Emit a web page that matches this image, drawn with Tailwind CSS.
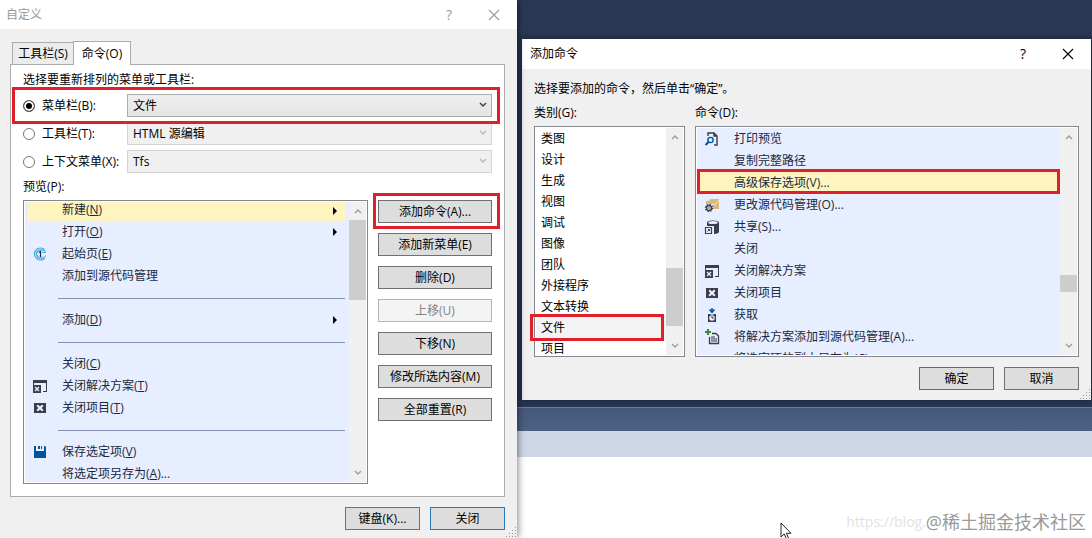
<!DOCTYPE html>
<html lang="zh-CN">
<head>
    <meta charset="UTF-8">
    <meta name="viewport" content="width=device-width, initial-scale=1.0">
    <title>自定义</title>
    <script src="https://cdn.jsdelivr.net/npm/@tailwindcss/browser@4"></script>
    <style>
        body, button, select {
            font-family: 'Open Sans', 'Noto Sans CJK SC', sans-serif;
        }
    </style>
</head>
<body class="bg-white text-xs leading-4 text-black">
    <!-- shared icons -->
    <svg class="hidden" xmlns="http://www.w3.org/2000/svg">
        <symbol id="close" viewBox="0 0 12 12"><path d="M1 1l10 10M11 1L1 11" fill="none" stroke="currentColor" stroke-width="1.1"/></symbol>
        <symbol id="down" viewBox="0 0 8 6"><path d="M1 1l3 3 3-3" fill="none" stroke="currentColor" stroke-width="1.5"/></symbol>
        <symbol id="up" viewBox="0 0 8 6"><path d="M1 5l3-3 3 3" fill="none" stroke="currentColor" stroke-width="1.5"/></symbol>
        <symbol id="arrow" viewBox="0 0 4 8"><path d="M0 0l4 4-4 4z" fill="currentColor"/></symbol>
        <symbol id="close-solution" viewBox="0 0 16 16">
            <path d="M1 2h14v12h-4v-1h3V5H2v2H1z" fill="#3b3d4a"/>
            <path d="M1 7h8v8H1z" fill="#3b3d4a"/>
            <path d="M3 9l4 4M7 9l-4 4" stroke="#e7eeff" stroke-width="1.4"/>
        </symbol>
        <symbol id="close-project" viewBox="0 0 16 16">
            <path d="M2 3h12v10H2z" fill="#3b3d4a"/>
            <path d="M5.200 5.200l5.600 5.600M10.800 5.200l-5.600 5.600" stroke="#f2f5ff" stroke-width="2"/>
        </symbol>
        <symbol id="grip" viewBox="0 0 12 12">
            <path d="M10 1h1v1h-1zM7 4h1v1h-1zM10 4h1v1h-1zM4 7h1v1h-1zM7 7h1v1h-1zM10 7h1v1h-1zM1 10h1v1h-1zM4 10h1v1h-1zM7 10h1v1h-1zM10 10h1v1h-1z" fill="#8d99b3"/>
        </symbol>
    </svg>

    <div class="grid min-h-screen grid-cols-[517fr_575fr]">
        <!-- customize window -->
        <section class="relative z-10 flex flex-col bg-[#f0f0f0] shadow-[0_0_8px_rgba(0,0,0,0.6)]">
            <header class="flex h-[29px] items-center bg-white pr-[17px] pl-1.5 text-[#999]">
                <h1 class="flex-1">自定义</h1>
                <button class="w-4 text-sm" aria-label="帮助">?</button>
                <button class="ml-[31px]" aria-label="关闭窗口"><svg class="size-3"><use href="#close"/></svg></button>
            </header>

            <div class="px-2.5 pt-3 pr-3">
                <div class="relative z-10 -mb-px flex items-end pl-0.5" role="tablist">
                    <button class="mb-px h-[22px] w-[61px] border border-r-0 border-b-0 border-[#acacac] bg-[#ececec]" role="tab">工具栏(S)</button>
                    <button class="h-6 w-[58px] border border-b-0 border-[#acacac] bg-white" role="tab" aria-selected="true">命令(O)</button>
                </div>

                <div class="border border-[#acacac] bg-white px-3 pt-[7px] pb-3">
                    <p>选择要重新排列的菜单或工具栏:</p>

                    <div class="mt-1.5 space-y-[5px]">
                        <div class="relative z-10 flex h-[23px] items-center">
                            <input id="r-menu" type="radio" name="target" checked class="size-3 appearance-none rounded-full border border-[#555] bg-white checked:bg-black checked:shadow-[inset_0_0_0_2px_white]">
                            <label for="r-menu" class="w-[92px] pl-[7px]">菜单栏(B):</label>
                            <div class="relative flex-1">
                                <select aria-label="菜单栏" class="block h-[23px] w-full appearance-none border border-[#acacac] bg-linear-to-b from-[#efefef] to-[#e4e4e4] px-[5px]"><option>文件</option></select>
                                <svg class="pointer-events-none absolute top-2 right-[5px] h-1.5 w-2 text-[#444]"><use href="#down"/></svg>
                            </div>
                            <div class="pointer-events-none absolute -inset-y-[7px] -right-2 -left-[11px] border-3 border-[#e01f2a]"></div>
                        </div>
                        <div class="flex h-[23px] items-center">
                            <input id="r-tool" type="radio" name="target" class="size-3 appearance-none rounded-full border border-[#777] bg-white">
                            <label for="r-tool" class="w-[92px] pl-[7px]">工具栏(T):</label>
                            <div class="relative flex-1">
                                <select disabled aria-label="工具栏" class="block h-[23px] w-full appearance-none border border-[#d4d4d4] bg-[#f0f0f0] px-[5px]"><option>HTML 源编辑</option></select>
                                <svg class="pointer-events-none absolute top-2 right-[5px] h-1.5 w-2 text-[#bbb]"><use href="#down"/></svg>
                            </div>
                        </div>
                        <div class="flex h-[23px] items-center">
                            <input id="r-ctx" type="radio" name="target" class="size-3 appearance-none rounded-full border border-[#777] bg-white">
                            <label for="r-ctx" class="w-[92px] pl-[7px] whitespace-nowrap">上下文菜单(X):</label>
                            <div class="relative flex-1">
                                <select disabled aria-label="上下文菜单" class="block h-[23px] w-full appearance-none border border-[#d4d4d4] bg-[#f0f0f0] px-[5px]"><option>Tfs</option></select>
                                <svg class="pointer-events-none absolute top-2 right-[5px] h-1.5 w-2 text-[#bbb]"><use href="#down"/></svg>
                            </div>
                        </div>
                    </div>

                    <p class="mt-1.5">预览(P):</p>

                    <div class="mt-[5px] flex gap-2.5">
                        <!-- menu preview -->
                        <div class="flex h-[284px] flex-1 border border-[#828790] bg-white p-px">
                            <ul class="flex-1 overflow-hidden bg-[#e7eeff] pr-1 pl-[3px] text-[#1b293e]">
                                <li class="flex h-[19px] items-center bg-[#fdf4bf] pr-2 pb-1 pl-[34px]"><span class="flex-1">新建(<u>N</u>)</span><svg class="mt-0.5 h-2 w-1 text-black"><use href="#arrow"/></svg></li>
                                <li class="flex h-[22px] items-center pr-2 pl-[34px]"><span class="flex-1">打开(<u>O</u>)</span><svg class="h-2 w-1 text-black"><use href="#arrow"/></svg></li>
                                <li class="flex h-[22px] items-center pl-1">
                                    <svg class="mr-3.5 size-4" viewBox="0 0 16 16" fill="none" stroke="#35a8d8">
                                        <path d="M12.500 3.500A6 6 0 1 0 12.500 12.500" stroke-width="1.200"/>
                                        <path d="M11.300 5A4 4 0 1 0 11.300 11" stroke-width="1.200"/>
                                        <path d="M10.500 2.500a6 6 0 0 1 3 4h-3M13.500 9.500a6 6 0 0 1-3 4" stroke-width="1"/>
                                        <path d="M7 6.500L8.500 5.500V11" stroke="#1b293e" stroke-width="1.200"/>
                                    </svg>
                                    起始页(<u>E</u>)
                                </li>
                                <li class="flex h-[22px] items-center pl-[34px]">添加到源代码管理</li>
                                <li class="flex h-[22px] items-center pl-[30px]"><hr class="flex-1 border-[#8591b0]"></li>
                                <li class="flex h-[22px] items-center pr-2 pl-[34px]"><span class="flex-1">添加(<u>D</u>)</span><svg class="h-2 w-1 text-black"><use href="#arrow"/></svg></li>
                                <li class="flex h-[22px] items-center pl-[30px]"><hr class="flex-1 border-[#8591b0]"></li>
                                <li class="flex h-[22px] items-center pl-[34px]">关闭(<u>C</u>)</li>
                                <li class="flex h-[22px] items-center pl-1"><svg class="mr-3.5 size-4"><use href="#close-solution"/></svg>关闭解决方案(<u>T</u>)</li>
                                <li class="flex h-[22px] items-center pl-1"><svg class="mr-3.5 size-4"><use href="#close-project"/></svg>关闭项目(<u>T</u>)</li>
                                <li class="flex h-[22px] items-center pl-[30px]"><hr class="flex-1 border-[#8591b0]"></li>
                                <li class="flex h-[22px] items-center pl-1">
                                    <svg class="mr-3.5 size-4" viewBox="0 0 16 16"><path d="M2 2h2v5h8V2h1l1 1v11H2zM6 2h2v3H6zM9 2h1v3H9z" fill="#00539c"/></svg>
                                    保存选定项(<u>V</u>)
                                </li>
                                <li class="flex h-[22px] items-center pl-[34px]">将选定项另存为(<u>A</u>)...</li>
                            </ul>
                            <div class="flex w-[17px] flex-col items-center bg-[#f0f0f0] text-[#a0a0a0]">
                                <svg class="my-1.5 h-1.5 w-2 shrink-0"><use href="#up"/></svg>
                                <div class="h-20 w-full bg-[#cdcdcd]"></div>
                                <svg class="mt-auto mb-1.5 h-1.5 w-2 shrink-0"><use href="#down"/></svg>
                            </div>
                        </div>

                        <div class="flex w-[114px] flex-col gap-2.5">
                            <div class="relative">
                                <button class="block h-[23px] w-full border border-[#707070] bg-[#ddd]">添加命令(A)...</button>
                                <div class="pointer-events-none absolute -top-[7px] -right-2 -bottom-1.5 -left-[5px] border-3 border-[#e01f2a]"></div>
                            </div>
                            <button class="h-[23px] border border-[#707070] bg-[#ddd]">添加新菜单(E)</button>
                            <button class="h-[23px] border border-[#707070] bg-[#ddd]">删除(D)</button>
                            <button disabled class="h-[23px] border border-[#b5b5b5] bg-[#f4f4f4] text-[#838383]">上移(U)</button>
                            <button class="h-[23px] border border-[#707070] bg-[#ddd]">下移(N)</button>
                            <button class="h-[23px] border border-[#707070] bg-[#ddd]">修改所选内容(M)</button>
                            <button class="h-[23px] border border-[#707070] bg-[#ddd]">全部重置(R)</button>
                        </div>
                    </div>
                </div>

                <div class="mt-2.5 flex justify-end gap-2.5">
                    <button class="h-[23px] w-[75px] border border-[#707070] bg-[#ddd]">键盘(K)...</button>
                    <button class="h-[23px] w-[75px] border border-[#2a7ab8] bg-[#ddd]">关闭</button>
                </div>
            </div>
            <svg class="absolute right-0 bottom-0 size-3"><use href="#grip"/></svg>
        </section>

        <!-- main window behind, with the add command dialog -->
        <div class="flex flex-col">
            <div class="bg-[#293955] pt-[39px] pr-px pb-[7px] pl-[5px]">
                <section class="bg-[#f0f0f0] shadow-[0_0_6px_1px_rgba(20,20,40,0.6)]">
                    <header class="flex h-[30px] items-center bg-white pr-[17px] pl-2">
                        <h2 class="flex-1">添加命令</h2>
                        <button class="w-4 text-sm" aria-label="帮助">?</button>
                        <button class="ml-[31px]" aria-label="关闭窗口"><svg class="size-3"><use href="#close"/></svg></button>
                    </header>

                    <div class="relative px-3 pt-3 pb-2.5">
                        <p>选择要添加的命令，然后单击“确定”。</p>
                        <div class="mt-2 flex gap-2.5">
                            <div class="w-[151px]">
                                <p>类别(G):</p>
                                <div class="relative mt-[5px] flex h-[231px] border border-[#828790] bg-white p-px">
                                    <ul class="flex-1 overflow-hidden pl-[5px]">
                                        <li class="flex h-[21px] items-center">类图</li>
                                        <li class="flex h-[21px] items-center">设计</li>
                                        <li class="flex h-[21px] items-center">生成</li>
                                        <li class="flex h-[21px] items-center">视图</li>
                                        <li class="flex h-[21px] items-center">调试</li>
                                        <li class="flex h-[21px] items-center">图像</li>
                                        <li class="flex h-[21px] items-center">团队</li>
                                        <li class="flex h-[21px] items-center">外接程序</li>
                                        <li class="flex h-[21px] items-center">文本转换</li>
                                        <li class="-ml-[5px] flex h-[21px] items-center bg-[#f3f3f3] pl-[5px]">文件</li>
                                        <li class="flex h-[21px] items-center">项目</li>
                                    </ul>
                                    <div class="flex w-[17px] flex-col items-center bg-[#f0f0f0] text-[#a0a0a0]">
                                        <svg class="mt-1.5 h-1.5 w-2 shrink-0"><use href="#up"/></svg>
                                        <div class="mt-auto h-[58px] w-full bg-[#cdcdcd]"></div>
                                        <svg class="mt-[17px] mb-1.5 h-1.5 w-2 shrink-0"><use href="#down"/></svg>
                                    </div>
                                    <div class="pointer-events-none absolute top-[187px] right-5 -left-[5px] h-[27px] border-3 border-[#e01f2a]"></div>
                                </div>
                            </div>

                            <div class="flex-1">
                                <p>命令(D):</p>
                                <div class="relative mt-[5px] flex h-[231px] border border-[#828790] bg-white p-px">
                                    <ul class="flex-1 overflow-hidden bg-[#e7eeff] text-[#1b293e]">
                                        <li class="flex h-[22px] items-center pl-[7px]">
                                            <svg class="mr-3.5 size-4" viewBox="0 0 16 16" fill="none">
                                                <path d="M4 5V2h6l3 3v9h-3M10 2v3h3" stroke="#3b3d4a" stroke-width="1.400"/>
                                                <circle cx="6.500" cy="9" r="2.600" stroke="#00539c" stroke-width="1.400"/>
                                                <path d="M4.600 11L1.500 14" stroke="#00539c" stroke-width="2"/>
                                            </svg>
                                            打印预览
                                        </li>
                                        <li class="flex h-[22px] items-center pl-[37px]">复制完整路径</li>
                                        <li class="flex h-[22px] items-center bg-[#fdf4bf] pl-[37px]">高级保存选项(V)...</li>
                                        <li class="flex h-[22px] items-center pl-[7px]">
                                            <svg class="mr-3.5 size-4" viewBox="0 0 16 16" fill="none">
                                                <path d="M2 4h3l1-2h9v10H9V7H2z" fill="#dcb67a"/>
                                                <path d="M9 6l2 2 4-5" stroke="#f5e6cc" stroke-width="1"/>
                                                <circle cx="5" cy="11" r="2.500" stroke="#3b3d4a" stroke-width="1.400"/>
                                                <circle cx="5" cy="11" r="3.600" stroke="#3b3d4a" stroke-width="1.200" stroke-dasharray="1.400 1.430"/>
                                                <circle cx="5" cy="11" r=".8" fill="#3b3d4a"/>
                                            </svg>
                                            更改源代码管理(O)...
                                        </li>
                                        <li class="flex h-[22px] items-center pl-[7px]">
                                            <svg class="mr-3.5 size-4" viewBox="0 0 16 16" fill="none">
                                                <path d="M3 7V3.500C3 .800 15 .800 15 3.500V13c0 1-3 2-5 2V7z" fill="#3b3d4a"/>
                                                <ellipse cx="9" cy="3.500" rx="4.800" ry="1.500" fill="#e7eeff"/>
                                                <path d="M1.500 8.500h6v6h-6z" fill="#e7eeff" stroke="#3b3d4a" stroke-width="1.200"/>
                                                <path d="M3.500 12.500l2-2M4 10.500h1.500V12" stroke="#3b3d4a"/>
                                            </svg>
                                            共享(S)...
                                        </li>
                                        <li class="flex h-[22px] items-center pl-[37px]">关闭</li>
                                        <li class="flex h-[22px] items-center pl-[7px]"><svg class="mr-3.5 size-4"><use href="#close-solution"/></svg>关闭解决方案</li>
                                        <li class="flex h-[22px] items-center pl-[7px]"><svg class="mr-3.5 size-4"><use href="#close-project"/></svg>关闭项目</li>
                                        <li class="flex h-[22px] items-center pl-[7px]">
                                            <svg class="mr-3.5 size-4" viewBox="0 0 16 16" fill="none">
                                                <path d="M7.300 1h1.400v2l1.300-1 1 1-3 3.500L5 3l1-1 1.300 1z" fill="#00539c"/>
                                                <path d="M4 7h2l2 1 2-1h2v8H4z" fill="#3b3d4a"/>
                                                <circle cx="8" cy="11" r="2.800" fill="#e7eeff"/>
                                                <path d="M8 9v2h1.800" stroke="#3b3d4a"/>
                                            </svg>
                                            获取
                                        </li>
                                        <li class="flex h-[22px] items-center pl-[7px]">
                                            <svg class="mr-3.5 size-4" viewBox="0 0 16 16" fill="none">
                                                <path d="M4 0v6M1 3h6" stroke="#388a34" stroke-width="2"/>
                                                <path d="M8 4.500h4l2.500 2.500v7.500h-9V8" stroke="#3b3d4a" stroke-width="1.300"/>
                                                <path d="M7 8h4M7 10h6M7 12h6" stroke="#3b3d4a" stroke-width="1.100"/>
                                            </svg>
                                            将解决方案添加到源代码管理(A)...
                                        </li>
                                        <li class="flex h-[22px] items-center pl-[37px]">将选定项的副本另存为(C)...</li>
                                    </ul>
                                    <div class="flex w-[17px] flex-col items-center bg-[#f0f0f0] text-[#a0a0a0]">
                                        <svg class="mt-1.5 h-1.5 w-2 shrink-0"><use href="#up"/></svg>
                                        <div class="mt-auto h-[17px] w-full bg-[#cdcdcd]"></div>
                                        <svg class="mt-[51px] mb-1.5 h-1.5 w-2 shrink-0"><use href="#down"/></svg>
                                    </div>
                                    <div class="pointer-events-none absolute top-[42px] right-[18px] left-px h-[25px] border-3 border-[#e01f2a]"></div>
                                </div>
                            </div>
                        </div>

                        <div class="mt-2.5 flex justify-end gap-2.5">
                            <button class="h-[23px] w-[75px] border border-[#2a7ab8] bg-[#ddd]">确定</button>
                            <button class="h-[23px] w-[75px] border border-[#707070] bg-[#ddd]">取消</button>
                        </div>
                        <svg class="absolute right-0 bottom-0 size-3"><use href="#grip"/></svg>
                    </div>
                </section>
            </div>
            <div class="h-6 border-t border-[#6b7b9c] bg-linear-to-b from-[#45597b] to-[#4d6082]"></div>
            <div class="h-[26px] bg-[#cfd6e5]"></div>
            <div class="relative flex flex-1 items-end justify-end bg-white pr-1.5 pb-1">
                <svg class="absolute top-[65px] left-[263px] h-[18px] w-3" viewBox="0 0 12 18"><path d="M1 1v14l3.200-3 2.300 5 2-1-2.200-4.700H11z" fill="#fff" stroke="#222"/></svg>
                <span class="text-sm leading-6 text-[#e2e2e2]">https://blog.</span>
                <span class="text-lg leading-6 text-[#999]">@稀土掘金技术社区</span>
            </div>
        </div>
    </div>
</body>
</html>
